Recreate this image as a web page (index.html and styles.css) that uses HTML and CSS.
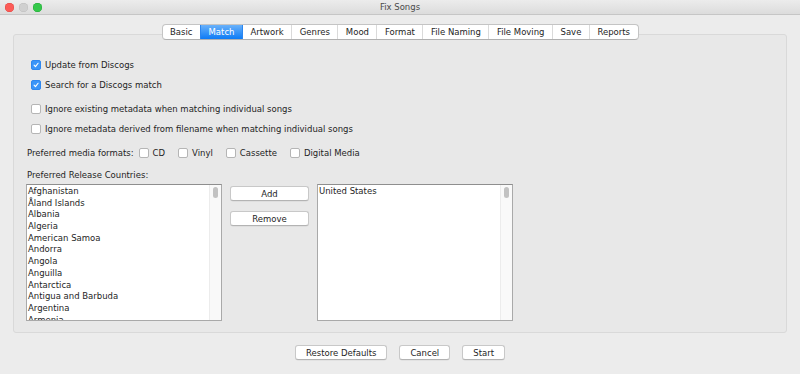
FILE: index.html
```html
<!DOCTYPE html>
<html lang="en">

<head>
    <meta charset="UTF-8">
    <meta name="viewport" content="width=device-width, initial-scale=1.0">
    <title>Fix Songs</title>
    <link rel="stylesheet" href="styles.css">
</head>

<body>
    <div class="window">
        <!-- Title bar -->
        <header class="titlebar">
            <div class="lights">
                <span class="light red"></span>
                <span class="light grey"></span>
                <span class="light green"></span>
            </div>
            <div class="title">Fix Songs</div>
            <div></div>
        </header>

        <div class="content">
            <nav class="tabs">
                <span class="tab">Basic</span>
                <span class="tab active">Match</span>
                <span class="tab">Artwork</span>
                <span class="tab">Genres</span>
                <span class="tab">Mood</span>
                <span class="tab">Format</span>
                <span class="tab">File Naming</span>
                <span class="tab">File Moving</span>
                <span class="tab">Save</span>
                <span class="tab">Reports</span>
            </nav>

            <section class="panel">
                <label class="check-row">
                    <span class="box checked"><svg viewBox="0 0 10 10"><path d="M2.6 5.2 L4.3 7 L7.6 2.8" /></svg></span>
                    Update from Discogs
                </label>
                <label class="check-row">
                    <span class="box checked"><svg viewBox="0 0 10 10"><path d="M2.6 5.2 L4.3 7 L7.6 2.8" /></svg></span>
                    Search for a Discogs match
                </label>
                <label class="check-row spaced">
                    <span class="box"></span>
                    Ignore existing metadata when matching individual songs
                </label>
                <label class="check-row">
                    <span class="box"></span>
                    Ignore metadata derived from filename when matching individual songs
                </label>

                <div class="formats">
                    <span class="formats-label">Preferred media formats:</span>
                    <label class="option"><span class="box"></span>CD</label>
                    <label class="option"><span class="box"></span>Vinyl</label>
                    <label class="option"><span class="box"></span>Cassette</label>
                    <label class="option"><span class="box"></span>Digital Media</label>
                </div>

                <div class="caption">Preferred Release Countries:</div>

                <div class="countries">
                    <div class="list">
                        <ul class="items">
                            <li>Afghanistan</li>
                            <li>Åland Islands</li>
                            <li>Albania</li>
                            <li>Algeria</li>
                            <li>American Samoa</li>
                            <li>Andorra</li>
                            <li>Angola</li>
                            <li>Anguilla</li>
                            <li>Antarctica</li>
                            <li>Antigua and Barbuda</li>
                            <li>Argentina</li>
                            <li>Armenia</li>
                        </ul>
                        <div class="scroll"><span class="thumb"></span></div>
                    </div>

                    <div class="list-buttons">
                        <button class="btn">Add</button>
                        <button class="btn">Remove</button>
                    </div>

                    <div class="list">
                        <ul class="items">
                            <li>United States</li>
                        </ul>
                        <div class="scroll"><span class="thumb"></span></div>
                    </div>
                </div>
            </section>

            <footer class="actions">
                <button class="btn">Restore Defaults</button>
                <button class="btn">Cancel</button>
                <button class="btn">Start</button>
            </footer>
        </div>
    </div>
</body>

</html>
```

FILE: styles.css
```css
/* Base */
body {
    margin: 0;
    background: #ececec;
    font-family: 'DejaVu Sans', sans-serif;
    font-size: 8.5px;
    color: #1e1e1e;
}

.window {
    width: 800px;
    height: 374px;
    overflow: hidden;
}

/* Title bar */
.titlebar {
    height: 14px;
    display: grid;
    grid-template-columns: 1fr auto 1fr;
    align-items: center;
    background: linear-gradient(to bottom, #ececec, #dcdcdc);
    border-bottom: 1px solid #c6c6c6;
}

.lights {
    display: flex;
    gap: 5px;
    padding-left: 5px;
}

.light {
    width: 9px;
    height: 9px;
    border-radius: 50%;
}

.red {
    background: #fc5b57;
    box-shadow: inset 0 0 0 0.5px #e0443e;
}

.grey {
    background: #d0d0d0;
    box-shadow: inset 0 0 0 0.5px #bdbdbd;
}

.green {
    background: #34c84a;
    box-shadow: inset 0 0 0 0.5px #1fa834;
}

.title {
    color: #4a4a4a;
    font-size: 8.5px;
}

/* Main content */
.content {
    padding: 9px 13px 0;
}

/* Tabs */
.tabs {
    position: relative;
    z-index: 1;
    display: flex;
    justify-content: center;
    width: max-content;
    margin: 0 auto -6px;
    background: #fff;
    border: 1px solid #c4c4c4;
    border-bottom-color: #b0b0b0;
    border-radius: 4px;
    overflow: hidden;
}

.tab {
    height: 14px;
    line-height: 14px;
    padding: 0 7.5px;
    border-left: 1px solid #dadada;
}

.tab:first-child {
    border-left: none;
}

.tab.active {
    background: linear-gradient(to bottom, #69b1fa, #0d7bf6);
    color: #fff;
    border-left-color: #2b86f0;
}

.tab.active + .tab {
    border-left-color: #2b86f0;
}

/* Panel */
.panel {
    height: 274px;
    padding: 23px 12px 0;
    background: #e8e8e8;
    border: 1px solid #d9d9d9;
    border-radius: 3px;
}

.check-row {
    display: flex;
    align-items: center;
    height: 14px;
    margin: 0 0 6px 5px;
}

.check-row.spaced {
    margin-top: 10px;
}

.box {
    box-sizing: border-box;
    width: 10px;
    height: 10px;
    margin-right: 4px;
    background: #fff;
    border: 1px solid #b5b5b5;
    border-radius: 2px;
    display: inline-flex;
    flex-shrink: 0;
}

.box.checked {
    background: #3a95f8;
    border-color: #2f87ee;
}

.box svg {
    width: 8px;
    height: 8px;
    fill: none;
    stroke: #fff;
    stroke-width: 1.4;
    stroke-linecap: round;
    stroke-linejoin: round;
}

/* Media formats */
.formats {
    display: flex;
    align-items: center;
    height: 14px;
    margin-top: 10px;
    padding-left: 1px;
}

.formats-label {
    margin-right: 5px;
}

.option {
    display: flex;
    align-items: center;
    margin-right: 13px;
}

.caption {
    height: 14px;
    line-height: 14px;
    margin-top: 8px;
    padding-left: 1px;
}

/* Country lists */
.countries {
    display: flex;
    gap: 8px;
    margin-top: 2px;
}

.list {
    box-sizing: border-box;
    width: 196px;
    height: 137px;
    display: flex;
    background: #fff;
    border: 1px solid #a9a9a9;
    border-top-color: #8e8e8e;
    overflow: hidden;
}

.items {
    flex: 1;
    list-style: none;
    margin: 0;
    padding: 1px 0 0 1px;
}

.items li {
    height: 11.7px;
    line-height: 11.7px;
    white-space: nowrap;
}

.scroll {
    width: 11px;
    background: #f9f9f9;
    border-left: 1px solid #ececec;
    display: flex;
    justify-content: center;
    padding-top: 2px;
}

.thumb {
    width: 5px;
    height: 11px;
    border-radius: 3px;
    background: #c2c2c2;
}

.list-buttons {
    width: 79px;
    display: flex;
    flex-direction: column;
    gap: 10px;
    padding-top: 2px;
}

/* Buttons */
.btn {
    box-sizing: border-box;
    height: 15px;
    padding: 0 10px;
    font-family: inherit;
    font-size: 8.5px;
    color: #1e1e1e;
    background: #fff;
    border: 1px solid #c8c8c8;
    border-bottom-color: #b3b3b3;
    border-radius: 3px;
    box-shadow: 0 0.5px 0.5px rgba(0, 0, 0, 0.08);
}

.list-buttons .btn {
    width: 100%;
}

.actions {
    display: flex;
    justify-content: center;
    gap: 12px;
    margin-top: 12px;
}
```
